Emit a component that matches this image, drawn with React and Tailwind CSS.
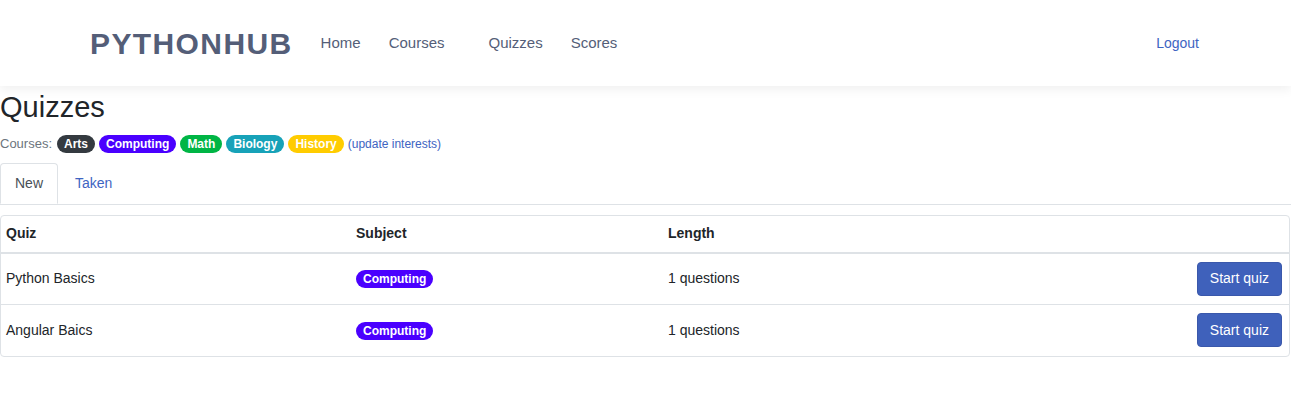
import React from 'react';

const badgeColors = {
  Arts: 'bg-[#343a40] text-white',
  Computing: 'bg-[#4a00ff] text-white',
  Math: 'bg-[#00b545] text-white',
  Biology: 'bg-[#17a2b8] text-white',
  History: 'bg-[#ffcc00] text-white',
};

const Badge = ({ name }) => (
  <span className={`inline-block rounded-full px-[7px] py-[2px] text-[12px] font-bold leading-[14px] ${badgeColors[name]}`}>
    {name}
  </span>
);

const quizzes = [
  { name: 'Python Basics', subject: 'Computing', length: '1 questions' },
  { name: 'Angular Baics', subject: 'Computing', length: '1 questions' },
];

export default function App() {
  return (
    <div className="min-h-[418px] bg-white text-[#212529]" style={{ fontFamily: '"Liberation Sans", Arial, sans-serif' }}>
      {/* Navbar */}
      <nav className="h-[86px] bg-white shadow-[0_4px_10px_rgba(0,0,0,0.06)] flex items-center pl-[90px] pr-[92px] relative z-10">
        <a className="text-[30px] font-bold tracking-[1.4px] text-[#545e78]">PYTHONHUB</a>
        <div className="flex items-center text-[15px] text-[#545e78] ml-[28px]">
          <a className="mr-[28px]">Home</a>
          <a className="mr-[44px]">Courses</a>
          <a className="mr-[28px]">Quizzes</a>
          <a>Scores</a>
        </div>
        <a className="ml-auto text-[14px] text-[#3e64c2]">Logout</a>
      </nav>

      <main>
        <h2 className="text-[29px] leading-[40px] mt-[1px] text-[#212529]">Quizzes</h2>
        <div className="flex items-center gap-[4px] mt-[7px] text-[13px]">
          <span className="text-[#6c757d] mr-[1px]">Courses:</span>
          {['Arts', 'Computing', 'Math', 'Biology', 'History'].map((c) => (
            <Badge key={c} name={c} />
          ))}
          <a className="text-[12px] text-[#3e64c2]">(update interests)</a>
        </div>

        {/* Tabs */}
        <div className="flex border-b border-[#dee2e6] mt-[9px] text-[14px]">
          <div className="px-[14px] h-[41px] flex items-center border border-[#dee2e6] border-b-white rounded-t-[4px] -mb-px text-[#495057] bg-white">New</div>
          <div className="px-[17px] h-[41px] flex items-center text-[#3e64c2]">Taken</div>
        </div>

        {/* Table */}
        <div className="mt-[10px] mr-[1px] border border-[#dee2e6] rounded-[4px]">
          <div className="grid grid-cols-[350px_312px_1fr] h-[38px] items-center border-b-2 border-[#dee2e6] text-[14px] font-bold px-[5px]">
            <div>Quiz</div>
            <div>Subject</div>
            <div>Length</div>
          </div>
          {quizzes.map((q, i) => (
            <div key={q.name} className={`grid grid-cols-[350px_312px_1fr_auto] h-[51px] items-center px-[5px] pr-[7px] text-[14px] ${i < quizzes.length - 1 ? 'border-b border-[#dee2e6]' : ''}`}>
              <div>{q.name}</div>
              <div><Badge name={q.subject} /></div>
              <div>{q.length}</div>
              <button className="h-[34px] px-[12px] rounded-[4px] bg-[#3f61bb] border border-[#3a58ab] text-white text-[14px]">Start quiz</button>
            </div>
          ))}
        </div>
      </main>
    </div>
  );
}
